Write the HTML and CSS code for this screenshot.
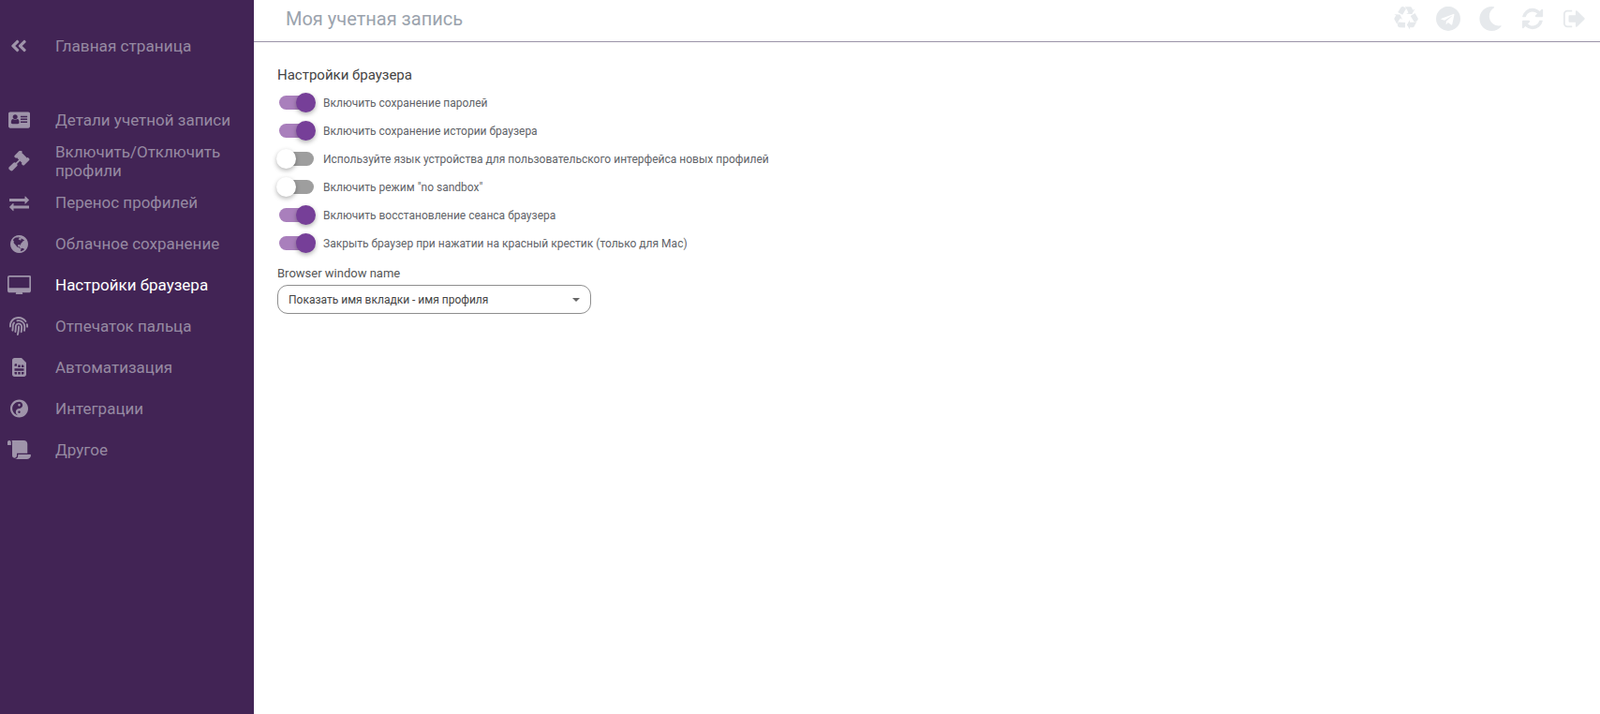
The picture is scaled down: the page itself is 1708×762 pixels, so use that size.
FILE: index.html
```html
<!DOCTYPE html>
<html lang="ru">
<head>
<meta charset="utf-8">
<title>Моя учетная запись</title>
<link rel="stylesheet" href="styles.css">
</head>
<body>
<div class="app">
  <aside class="sidebar">
    <a class="nav-item home">
      <span class="nav-icon"><svg width="18" height="20" viewBox="0 0 448 512"><path d="M223.700 239l136-136c9.400-9.400 24.600-9.400 33.900 0l22.600 22.600c9.400 9.400 9.400 24.600 0 33.900L319.900 256l96.400 96.400c9.400 9.400 9.400 24.600 0 33.900L393.700 409c-9.400 9.400-24.600 9.400-33.900 0l-136-136c-9.500-9.400-9.500-24.600-.100-34zm-192 34l136 136c9.400 9.400 24.600 9.400 33.900 0l22.600-22.600c9.400-9.400 9.400-24.600 0-33.900L127.900 256l96.400-96.400c9.400-9.400 9.400-24.600 0-33.900L201.700 103c-9.400-9.400-24.600-9.400-33.900 0l-136 136c-9.500 9.400-9.500 24.600-.100 34z"/></svg></span>
      <span class="nav-text">Главная страница</span>
    </a>
    <nav class="nav-list">
      <a class="nav-item">
        <span class="nav-icon"><svg width="23" height="18" viewBox="0 128 2048 1536"><path d="M1024 1131q0-64-9-117.500t-29.500-103-60.500-78-97-28.500q-6 4-30 18t-37.500 21.500-35.500 17.500-43 14.500-42 4.500-42-4.500-43-14.500-35.500-17.500-37.500-21.500-30-18q-57 0-97 28.500t-60.500 78-29.500 103-9 117.500 37 106.500 91 42.500h512q54 0 91-42.500t37-106.500zm-157-520q0-94-66.500-160.500t-160.500-66.500-160.500 66.500-66.500 160.500 66.500 160.500 160.500 66.500 160.500-66.500 66.500-160.500zm925 509v-64q0-14-9-23t-23-9h-576q-14 0-23 9t-9 23v64q0 14 9 23t23 9h576q14 0 23-9t9-23zm0-260v-56q0-15-10.500-25.500t-25.500-10.500h-568q-15 0-25.500 10.500t-10.500 25.500v56q0 15 10.500 25.500t25.500 10.500h568q15 0 25.500-10.500t10.500-25.500zm0-252v-64q0-14-9-23t-23-9h-576q-14 0-23 9t-9 23v64q0 14 9 23t23 9h576q14 0 23-9t9-23zm256-320v1216q0 66-47 113t-113 47h-1728q-66 0-113-47t-47-113v-1216q0-66 47-113t113-47h1728q66 0 113 47t47 113z"/></svg></span>
        <span class="nav-text">Детали учетной записи</span>
      </a>
      <a class="nav-item">
        <span class="nav-icon"><svg width="23" height="23" viewBox="0 0 1792 1792"><path transform="matrix(-1 0 0 1 1792 0)" d="M1771 1440q0 53-37 90l-107 108q-39 37-91 37-53 0-90-37l-363-364q-38-36-38-90 0-53 43-96l-256-256-126 126q-14 14-34 14t-34-14q2 2 12.500 12t12.500 13 10 11.500 10 13.500 6 13.500 5.500 16.500 1.500 18q0 38-28 68-3 3-16.500 18t-19 20.500-18.500 16.500-22 15.500-22 9-26 4.500q-40 0-68-28l-408-408q-28-28-28-68 0-13 4.500-26t9-22 15.500-22 16.500-18.500 20.500-19 18-16.500q30-28 68-28 10 0 18 1.500t16.500 5.500 13.500 6 13.500 10 11.500 10 13 12.500 12 12.500q-14-14-14-34t14-34l348-348q14-14 34-14t34 14q-2-2-12.500-12t-12.500-13-10-11.500-10-13.500-6-13.500-5.500-16.500-1.500-18q0-38 28-68 3-3 16.500-18t19-20.500 18.500-16.500 22-15.500 22-9 26-4.500q40 0 68 28l408 408q28 28 28 68 0 13-4.500 26t-9 22-15.500 22-16.500 18.500-20.500 19-18 16.500q-30 28-68 28-10 0-18-1.500t-16.500-5.500-13.500-6-13.500-10-11.500-10-13-12.500-12-12.500q14 14 14 34t-14 34l-126 126 256 256q43-43 96-43 52 0 91 37l363 363q37 39 37 91z"/></svg></span>
        <span class="nav-text">Включить/Отключить профили</span>
      </a>
      <a class="nav-item">
        <span class="nav-icon"><svg width="21" height="21" viewBox="0 0 1792 1792"><path d="M1792 1184v192q0 13-9.500 22.500t-22.500 9.500h-1376v192q0 13-9.500 22.500t-22.500 9.500q-12 0-24-10l-319-320q-9-9-9-22 0-14 9-23l320-320q9-9 23-9 13 0 22.500 9.500t9.500 22.500v192h1376q13 0 22.500 9.500t9.500 22.500zm0-544q0 14-9 23l-320 320q-9 9-23 9-13 0-22.500-9.500t-9.500-22.500v-192h-1376q-13 0-22.500-9.500t-9.500-22.500v-192q0-13 9.500-22.500t22.500-9.500h1376v-192q0-14 9-23t23-9q12 0 24 10l319 319q9 9 9 23z"/></svg></span>
        <span class="nav-text">Перенос профилей</span>
      </a>
      <a class="nav-item">
        <span class="nav-icon"><svg width="19" height="19" viewBox="128 128 1536 1536"><path d="M896 128q209 0 385.500 103t279.500 279.500 103 385.500-103 385.500-279.500 279.500-385.500 103-385.500-103-279.500-279.500-103-385.500 103-385.500 279.500-279.500 385.500-103zm274 521q-2 1-9.500 9.500t-13.500 9.500q2 0 4.500-5t5-11 3.500-7q6-7 22-15 14-6 52-12 34-8 51 11-2-2 9.500-13t14.500-12q3-2 15-4.500t15-7.500l2-22q-12 1-17.500-7t-6.500-21q0 2-6 8 0-7-4.500-8t-11.500 1-9 1q-10-3-15-7.500t-8-16.500-4-15q-2-5-9.500-11t-9.500-10q-1-2-2.500-5.500t-3-6.500-4-5.500-5.500-2.500-7 5-7.500 10-4.500 5q-3-2-6-1.500t-4.500 1-4.500 3-5 3.500q-3 2-8.500 3t-8.500 2q15-5-1-11-10-4-16-3 9-4 7.500-12t-8.500-14h5q-1-4-8.500-8.500t-17.500-8.500-13-6q-8-5-34-9.500t-33-.5q-5 6-4.500 10.500t4 14 3.500 12.500q1 6-5.500 13t-6.500 12q0 7 14 15.500t10 21.500q-3 8-16 16t-16 12q-5 8-1.500 18.500t10.500 16.500q2 2 1.500 4t-3.500 4.500-5.500 4-6.500 3.500l-3 2q-11 5-20.500-6t-13.500-26q-7-25-16-30-23-8-29 1-5-13-41-26-25-9-58-4 6-1 0-15-7-15-19-12 3-6 4-17.500t1-13.500q3-13 12-23 1-1 7-8.500t9.500-13.500.5-6q35 4 50-11 5-5 11.500-17t10.500-17q9-6 14-5.500t14.500 5.500 14.500 5q14 1 15.500-11t-7.500-20q12 1 3-17-4-7-8-9-12-4-27 5-8 4 2 8-1-1-9.500 10.500t-16.500 17.500-16-5q-1-1-5.500-13.500t-9.500-13.500q-8 0-16 15 3-8-11-15t-24-8q19-12-8-27-7-4-20.500-5t-19.500 4q-5 7-5.500 11.500t5 8 10.500 5.500 11.500 4 8.500 3q14 10 8 14-2 1-8.500 3.500t-11.500 4.500-6 4q-3 4 0 14t-2 14q-5-5-9-17.500t-7-16.500q7 9-25 6l-10-1q-4 0-16 2t-20.500 1-13.500-8q-4-8 0-20 1-4 4-2-4-3-11-9.500t-10-8.500q-46 15-94 41 6 1 12-1 5-2 13-6.500t10-5.500q34-14 42-7l5-5q14 16 20 25-7-4-30-1-20 6-22 12 7 12 5 18-4-3-11.500-10t-14.500-11-15-5q-16 0-22 1-146 80-235 222 7 7 12 8 4 1 5 9t2.500 11 11.500-3q9 8 3 19 1-1 44 27 19 17 21 21 3 11-10 18-1-2-9-9t-9-4q-3 5 .5 18.500t10.500 12.500q-7 0-9.500 16t-2.500 35.500-1 23.500l2 1q-3 12 5.500 34.500t21.500 19.500q-13 3 20 43 6 8 8 9 3 2 12 7.500t15 10 10 10.500q4 5 10 22.500t14 23.500q-2 6 9.500 20t10.500 23q-1 0-2.500 1t-2.500 1q3 7 15.500 14t15.500 13q1 3 2 10t3 11 8 2q2-20-24-62-15-25-17-29-3-5-5.500-15.500t-4.500-14.500q2 0 6 1.500t8.500 3.500 7.500 4 2 3q-3 7 2 17.500t12 18.500 17 19 12 13q6 6 14 19.500t0 13.500q9 0 20 10.500t17 19.500q5 8 8 26t5 24q2 7 8.500 13.500t12.500 9.500l16 8 13 7q5 2 18.500 10.500t21.500 11.500q10 4 16 4t14.500-2.500 13.500-3.500q15-2 29 15t21 21q36 19 55 11-2 1 .5 7.500t8 15.500 9 14.500 5.500 8.500q5 6 18 15t18 15q6-4 7-9-3 8 7 20t18 10q14-3 14-32-31 15-49-18 0-1-2.500-5.500t-4-8.500-2.500-8.500 0-7.500 5-3q9 0 10-3.500t-2-12.500-4-13q-1-8-11-20t-12-15q-5 9-16 8t-16-9q0 1-1.500 5.500t-1.500 6.500q-13 0-15-1 1-3 2.500-17.500t3.500-22.500q1-4 5.500-12t7.500-14.500 4-12.500-4.500-9.500-17.500-2.500q-19 1-26 20-1 3-3 10.500t-5 11.500-9 7q-7 3-24 2t-24-5q-13-8-22.500-29t-9.500-37q0-10 2.500-26.500t3-25-5.500-24.500q3-2 9-9.500t10-10.500q2-1 4.500-1.500t4.500 0 4-1.500 3-6q-1-1-4-3-3-3-4-3 7 3 28.500-1.500t27.500 1.500q15 11 22-2 0-1-2.500-9.500t-.5-13.500q5 27 29 9 3 3 15.500 5t17.500 5q3 2 7 5.500t5.500 4.500 5-.5 8.500-6.500q10 14 12 24 11 40 19 44 7 3 11 2t4.500-9.500 0-14-1.500-12.500l-1-8v-18l-1-8q-15-3-18.500-12t1.500-18.500 15-18.500q1-1 8-3.500t15.500-6.500 12.500-8q21-19 15-35 7 0 11-9-1 0-5-3t-7.500-5-4.500-2q9-5 2-16 5-3 7.500-11t7.500-10q9 12 21 2 8-8 1-16 5-7 20.500-10.500t18.500-9.500q7 2 8-2t1-12 3-12q4-5 15-9t13-5l17-11q3-4 0-4 18 2 31-11 10-11-6-20 3-6-3-9.500t-15-5.500q3-1 11.500-.5t10.500-1.500q15-10-7-16-17-5-43 12zm-163 877q206-36 351-189-3-3-12.500-4.500t-12.500-3.500q-18-7-24-8 1-7-2.500-13t-8-9-12.500-8-11-7q-2-2-7-6t-7-5.500-7.500-4.500-8.500-2-10 1l-3 1q-3 1-5.500 2.500t-5.500 3-4 3 0 2.500q-21-17-36-22-5-1-11-5.500t-10.500-7-10-1.500-11.500 7q-5 5-6 15t-2 13q-7-5 0-17.500t2-18.500q-3-6-10.500-4.500t-12 4.500-11.500 8.500-9 6.500-8.500 5.500-8.500 7.500q-3 4-6 12t-5 11q-2-4-11.500-6.500t-9.500-5.500q2 10 4 35t5 38q7 31-12 48-27 25-29 40-4 22 12 26 0 7-8 20.500t-7 21.500q0 6 2 16z"/></svg></span>
        <span class="nav-text">Облачное сохранение</span>
      </a>
      <a class="nav-item active">
        <span class="nav-icon"><svg width="25" height="20" viewBox="0 0 1920 1536"><path d="M1792 992v-832q0-13-9.500-22.500t-22.500-9.500h-1600q-13 0-22.500 9.500t-9.500 22.500v832q0 13 9.500 22.500t22.500 9.500h1600q13 0 22.500-9.500t9.500-22.500zm128-832v1088q0 66-47 113t-113 47h-544q0 37 16 77.500t32 71 16 43.500q0 26-19 45t-45 19h-512q-26 0-45-19t-19-45q0-14 16-44t32-70 16-78h-544q-66 0-113-47t-47-113v-1088q0-66 47-113t113-47h1632q66 0 113 47t47 113z"/></svg></span>
        <span class="nav-text">Настройки браузера</span>
      </a>
      <a class="nav-item">
        <span class="nav-icon"><svg width="20" height="20" viewBox="0 0 512 512"><path d="M256.120 245.960c-13.250 0-24 10.740-24 24 1.140 72.250-8.140 141.900-27.700 211.550-2.730 9.720 2.150 30.490 23.120 30.490 10.480 0 20.110-6.920 23.090-17.520 13.530-47.910 31.040-125.410 29.480-224.520.010-13.250-10.730-24-23.990-24zm-.860-81.730C194 164.160 151.250 211.300 152.100 265.320c.750 47.940-3.750 95.910-13.370 142.550-2.690 12.980 5.670 25.690 18.640 28.360 13.050 2.670 25.670-5.660 28.360-18.650 10.340-50.060 15.170-101.580 14.370-153.020-.410-25.950 19.920-52.490 54.450-52.340 31.310.470 57.150 25.340 57.620 55.470.770 48.050-2.810 96.330-10.610 143.550-2.170 13.060 6.690 25.420 19.760 27.580 19.970 3.330 26.810-15.100 27.580-19.770 8.280-50.030 12.060-101.210 11.270-152.110-.880-55.800-47.940-101.880-104.910-102.720zm-110.690-19.780c-10.300-8.340-25.370-6.800-33.760 3.480-25.620 31.500-39.390 71.280-38.750 112 .590 37.580-2.470 75.270-9.110 112.050-2.340 13.050 6.310 25.530 19.360 27.890 20.110 3.500 27.070-14.810 27.890-19.360 7.190-39.840 10.500-80.660 9.860-121.330-.470-29.880 9.200-57.880 28-80.970 8.350-10.280 6.790-25.390-3.490-33.760zm109.470-62.330c-15.410-.410-30.870 1.440-45.780 4.970-12.890 3.060-20.870 15.980-17.830 28.890 3.060 12.890 16 20.830 28.890 17.830 11.050-2.610 22.470-3.770 34-3.690 75.430 1.130 137.730 61.500 138.880 134.580.590 37.880-1.280 76.110-5.580 113.630-1.500 13.170 7.950 25.080 21.110 26.580 16.720 1.950 25.510-11.880 26.580-21.110a929.060 929.060 0 0 0 5.890-119.850c-1.560-98.750-85.070-180.330-186.160-181.830zm252.070 121.450c-2.860-12.920-15.510-21.200-28.610-18.270-12.940 2.860-21.120 15.660-18.260 28.610 4.710 21.410 4.910 37.410 4.700 61.600-.110 13.250 10.550 24.090 23.800 24.200h.200c13.170 0 23.890-10.610 24-23.800.180-22.180.400-44.110-5.830-72.340zm-40.120-90.720C417.290 43.460 337.600 1.290 252.810.020 183.020-.820 118.470 24.910 70.460 72.940 24.090 119.370-.900 181.040.140 246.650l-.120 21.470c-.390 13.250 10.030 24.310 23.280 24.690.230.020.480.020.720.020 12.920 0 23.590-10.300 23.970-23.300l.160-23.640c-.830-52.500 19.160-101.860 56.280-139 38.760-38.800 91.340-59.670 147.680-58.860 69.450 1.030 134.730 35.560 174.620 92.390 7.610 10.860 22.560 13.450 33.420 5.860 10.840-7.620 13.460-22.590 5.840-33.430z"/></svg></span>
        <span class="nav-text">Отпечаток пальца</span>
      </a>
      <a class="nav-item">
        <span class="nav-icon"><svg width="15" height="20" viewBox="0 0 384 512"><path d="M0 64v384c0 35.300 28.700 64 64 64h256c35.300 0 64-28.700 64-64V128L256 0H64C28.700 0 0 28.700 0 64zm224 192h-64v-64h64v64zm96 0h-64v-64h32c17.700 0 32 14.300 32 32v32zm-64 128h64v32c0 17.700-14.300 32-32 32h-32v-64zm-96 0h64v64h-64v-64zm-96 0h64v64H96c-17.700 0-32-14.300-32-32v-32zm0-96h256v64H64v-64zm0-64v-32c0-17.700 14.300-32 32-32h32v64H64z"/></svg></span>
        <span class="nav-text">Автоматизация</span>
      </a>
      <a class="nav-item">
        <span class="nav-icon"><svg width="19" height="20" viewBox="0 0 496 512"><path d="M248 8C111.030 8 0 119.030 0 256s111.030 248 248 248 248-111.030 248-248S384.970 8 248 8zm0 376c-17.670 0-32-14.330-32-32s14.330-32 32-32 32 14.330 32 32-14.330 32-32 32zm0-128c-53.020 0-96 42.980-96 96s42.980 96 96 96c-106.040 0-192-85.960-192-192S141.960 64 248 64c53.020 0 96 42.980 96 96s-42.980 96-96 96zm0-128c-17.670 0-32 14.330-32 32s14.330 32 32 32 32-14.330 32-32-14.330-32-32-32z"/></svg></span>
        <span class="nav-text">Интеграции</span>
      </a>
      <a class="nav-item">
        <span class="nav-icon"><svg width="25" height="20" viewBox="0 0 640 512"><path d="M48 0C21.530 0 0 21.530 0 48v64c0 8.840 7.160 16 16 16h80V48C96 21.530 74.470 0 48 0zm208 412.570V352h288V96c0-52.940-43.060-96-96-96H111.590C121.740 13.410 128 29.920 128 48v368c0 38.870 34.660 69.650 74.750 63.120C234.240 474 256 444.460 256 412.570zM288 384v32c0 52.940-43.060 96-96 96h336c61.860 0 112-50.140 112-112 0-8.840-7.160-16-16-16H288z"/></svg></span>
        <span class="nav-text">Другое</span>
      </a>
    </nav>
  </aside>
  <main class="main">
    <header class="topbar">
      <h1 class="page-title">Моя учетная запись</h1>
      <div class="top-icons">
        <svg width="26" height="26" viewBox="0 0 1792 1792"><path d="M836 1169l-15 368-2 22-420-29q-36-3-67-31.500t-47-65.500q-11-27-14.500-55t4-65 12-55 21.500-64 19-53q78 12 509 28zm-387-586l180 379-147-92q-63 72-111.500 144.500t-72.500 125-39.500 94.500-18.500 63l-4 21-190-357q-17-26-18-56t6-47l8-18q35-63 114-188l-140-86zm1231 517l-188 359q-12 29-36.500 46.500t-43.500 20.500l-18 4q-71 7-219 12l8 164-230-367 211-362 7 173q170 16 283 5t170-33zm-785-924q-47 63-265 435l-317-187-19-12 225-356q20-31 60-45t80-10q24 2 48.500 12t42 21 41.500 33 36 34.500 36 39.500 32 35zm655 307l212 363q18 37 12.500 76t-27.500 74q-13 20-33 37t-38 28-48.500 22-47 16-51.500 14-46 12q-34-72-265-436l313-195zm-143-226l142-83-220 373-419-20 151-86q-34-89-75-166t-75.500-123.500-64.500-80-47-46.500l-17-13 405 1q31-3 58 10.500t39 28.500l11 15q39 61 112 190z"/></svg>
        <svg width="26" height="26" viewBox="0 0 1792 1792"><path d="M1189 1307l147-693q9-44-10.500-63t-51.500-7l-864 333q-29 11-39.500 25t-2.500 26.500 32 19.500l221 69 513-323q21-14 32-6 7 5-4 15l-415 375-16 228q23 0 45-22l108-104 224 165q64 36 81-38zm603-419q0 182-71 348t-191 286-286 191-348 71-348-71-286-191-191-286-71-348 71-348 191-286 286-191 348-71 348 71 286 191 191 286 71 348z"/></svg>
        <svg width="26" height="26" viewBox="0 0 512 512"><path d="M283.211 512c78.962 0 151.079-35.925 198.857-94.792 7.068-8.708-.639-21.430-11.562-19.350-124.203 23.654-238.262-71.576-238.262-196.954 0-72.222 38.662-138.635 101.498-174.394 9.686-5.512 7.250-20.197-3.756-22.230A258.156 258.156 0 0 0 283.211 0c-141.309 0-256 114.511-256 256 0 141.309 114.511 256 256 256z"/></svg>
        <svg width="26" height="26" viewBox="0 0 1792 1792"><path d="M1639 1056q0 5-1 7-64 268-268 434.500t-478 166.500q-146 0-282.500-55t-243.500-157l-129 129q-19 19-45 19t-45-19-19-45v-448q0-26 19-45t45-19h448q26 0 45 19t19 45-19 45l-137 137q71 66 161 102t187 36q134 0 250-65t186-179q11-17 53-117 8-23 30-23h192q13 0 22.500 9.500t9.500 22.500zm25-800v448q0 26-19 45t-45 19h-448q-26 0-45-19t-19-45 19-45l138-138q-148-137-349-137-134 0-250 65t-186 179q-11 17-53 117-8 23-30 23h-199q-13 0-22.500-9.500t-9.500-22.500v-7q65-268 270-434.500t480-166.500q146 0 284 55.500t245 156.500l130-129q19-19 45-19t45 19 19 45z"/></svg>
        <svg width="26" height="26" viewBox="0 0 1792 1792"><path d="M704 1440q0 4 1 20t.500 26.500-3 23.500-10 19.500-20.500 6.500h-320q-119 0-203.500-84.500t-84.500-203.500v-704q0-119 84.500-203.500t203.500-84.500h320q13 0 22.500 9.500t9.500 22.500q0 4 1 20t.500 26.500-3 23.500-10 19.500-20.500 6.500h-320q-66 0-113 47t-47 113v704q0 66 47 113t113 47h312l11.500 1 11.500 3 8 5.500 7 9 2 13.500zm928-544q0 26-19 45l-544 544q-19 19-45 19t-45-19-19-45v-288h-448q-26 0-45-19t-19-45v-384q0-26 19-45t45-19h448v-288q0-26 19-45t45-19 45 19l544 544q19 19 19 45z"/></svg>
      </div>
    </header>
    <section class="content">
      <h2 class="section-title">Настройки браузера</h2>
      <div class="toggle-list">
        <label class="toggle-row"><span class="switch on"><span class="thumb"></span></span><span class="toggle-label">Включить сохранение паролей</span></label>
        <label class="toggle-row"><span class="switch on"><span class="thumb"></span></span><span class="toggle-label">Включить сохранение истории браузера</span></label>
        <label class="toggle-row"><span class="switch"><span class="thumb"></span></span><span class="toggle-label">Используйте язык устройства для пользовательского интерфейса новых профилей</span></label>
        <label class="toggle-row"><span class="switch"><span class="thumb"></span></span><span class="toggle-label">Включить режим "no sandbox"</span></label>
        <label class="toggle-row"><span class="switch on"><span class="thumb"></span></span><span class="toggle-label">Включить восстановление сеанса браузера</span></label>
        <label class="toggle-row"><span class="switch on"><span class="thumb"></span></span><span class="toggle-label">Закрыть браузер при нажатии на красный крестик (только для Mac)</span></label>
      </div>
      <div class="field-label">Browser window name</div>
      <div class="select"><span>Показать имя вкладки - имя профиля</span><span class="caret"></span></div>
    </section>
  </main>
</div>
</body>
</html>
```
FILE: styles.css
```css
* { box-sizing: border-box; }
html, body { margin: 0; height: 100%; }
body { font-family: Roboto, "Noto Sans", sans-serif; background: #fff; overflow: hidden; }
.app { display: flex; height: 762px; }
.sidebar { width: 271px; flex: none; background: #422455; padding-top: 27px; }
.nav-item { display: flex; align-items: center; height: 44px; color: #968aa2; }
.nav-item svg { fill: #9f94aa; display: block; }
.nav-item.active { color: #fff; }
.nav-icon { width: 59px; flex: none; padding-right: 19px; display: flex; justify-content: center; }
.nav-text { font-size: 17px; line-height: 20px; width: 190px; }
.home .nav-text { font-size: 17.200px; }
.nav-list { margin-top: 35px; }
.main { flex: 1; min-width: 0; }
.topbar { height: 45px; border-bottom: 1px solid #9a94a8; display: flex; align-items: center; justify-content: space-between; padding: 0 14px 5px 34px; }
.page-title { margin: 0; font-size: 20px; font-weight: 400; color: #9ba3ad; }
.top-icons { display: flex; gap: 19px; margin-top: 1px; }
.top-icons svg { fill: #e6e9ec; display: block; }
.content { padding: 25px 25px; }
.section-title { margin: 0 0 4px; font-size: 15px; line-height: 20px; font-weight: 400; color: #444; }
.toggle-row { display: flex; align-items: center; height: 30px; }
.switch { position: relative; width: 37px; height: 15px; margin-left: 2px; border-radius: 8px; background: #9e9e9e; flex: none; }
.switch.on { background: #a97fbc; }
.thumb { position: absolute; top: -3px; left: -3px; width: 21px; height: 21px; border-radius: 50%; background: #fff; box-shadow: 0 2px 5px rgba(0,0,0,.3); }
.switch.on .thumb { left: 18px; background: #763f98; }
.toggle-label { margin: 2px 0 0 10px; font-size: 12.020px; color: #5f6368; }
.field-label { margin-top: 10px; font-size: 13px; line-height: 16px; color: #555; }
.select { margin-top: 4px; width: 335px; height: 31px; border: 1px solid #8e8e8e; border-radius: 11px; display: flex; align-items: center; justify-content: space-between; padding: 0 11px; font-size: 12px; color: #444; }
.caret { width: 0; height: 0; border-left: 4.500px solid transparent; border-right: 4.500px solid transparent; border-top: 4.500px solid #666; }
```
